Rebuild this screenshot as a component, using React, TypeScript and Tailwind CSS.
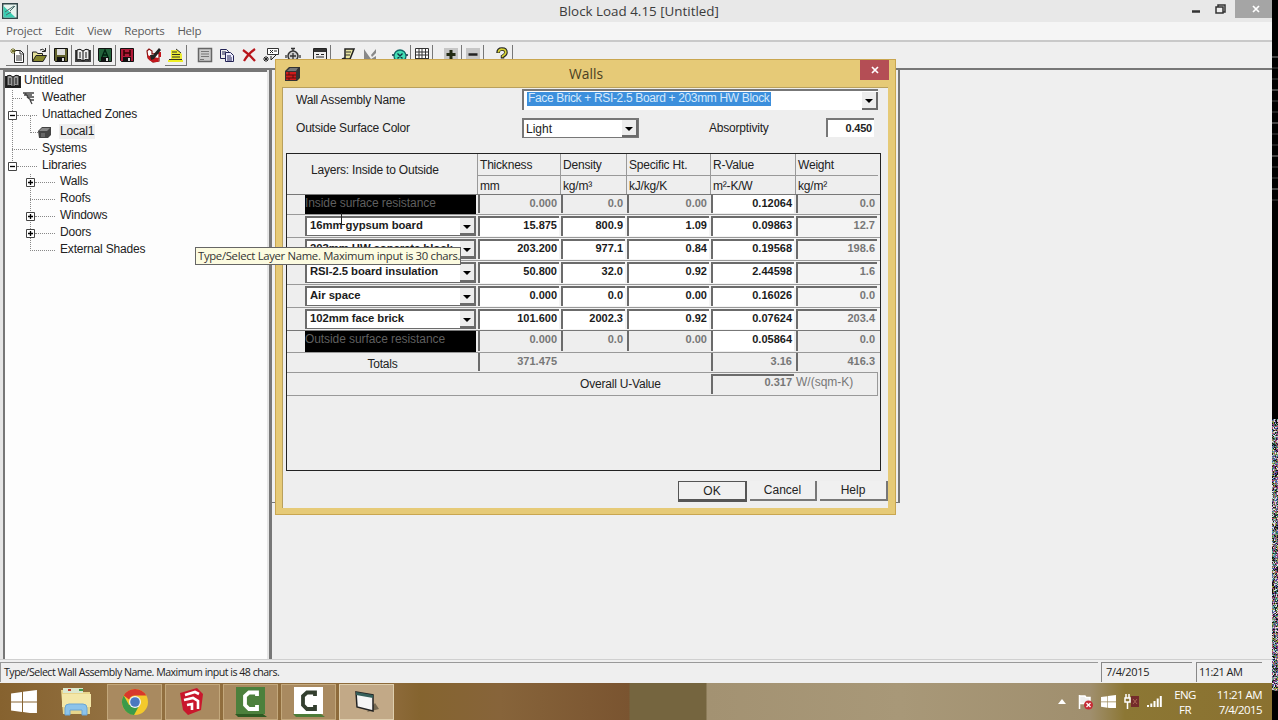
import React from 'react';
import clsx from 'clsx';

type Tone = 'edit' | 'locked';

interface Layer {
  name: string;
  values: string[];
  height: string;
}

const layers: Layer[] = [
  { name: '16mm gypsum board', values: ['15.875', '800.9', '1.09', '0.09863', '12.7'], height: 'h-[23px]' },
  { name: '203mm HW concrete block', values: ['203.200', '977.1', '0.84', '0.19568', '198.6'], height: 'h-[23px]' },
  { name: 'RSI-2.5 board insulation', values: ['50.800', '32.0', '0.92', '2.44598', '1.6'], height: 'h-[24px]' },
  { name: 'Air space', values: ['0.000', '0.0', '0.00', '0.16026', '0.0'], height: 'h-[23px]' },
  { name: '102mm face brick', values: ['101.600', '2002.3', '0.92', '0.07624', '203.4'], height: 'h-[23px]' },
];

const colWidths = ['w-[83px]', 'w-[66px]', 'w-[84px]', 'w-[85px]', 'w-[83px]'];

const headers = [
  ['Thickness', 'mm'],
  ['Density', 'kg/m³'],
  ['Specific Ht.', 'kJ/kg/K'],
  ['R-Value', 'm²-K/W'],
  ['Weight', 'kg/m²'],
];

const tree = [
  { label: 'Weather', level: 1, icon: 'weather' },
  { label: 'Unattached Zones', level: 1, box: '-' },
  { label: 'Local1', level: 2, icon: 'cube', selected: true },
  { label: 'Systems', level: 1 },
  { label: 'Libraries', level: 1, box: '-' },
  { label: 'Walls', level: 2, box: '+' },
  { label: 'Roofs', level: 2 },
  { label: 'Windows', level: 2, box: '+' },
  { label: 'Doors', level: 2, box: '+' },
  { label: 'External Shades', level: 2 },
];

const Svg: React.FC<{ children: React.ReactNode; className?: string; size?: number }> = ({ children, className, size = 16 }) => (
  <svg width={size} height={size} viewBox="0 0 16 16" className={clsx('shrink-0', className)} fill="none">
    {children}
  </svg>
);

const Book = ({ dark = false }: { dark?: boolean }) => (
  <Svg>
    <path d="M0 3h2v10h12V3h2v12H0z" fill={dark ? '#222' : '#444'} />
    <path d="M2 3q3-2 6 1 3-3 6-1v10q-3-2-6 1-3-3-6-1z" fill={dark ? '#999' : '#eee'} stroke="#111" />
    <path d="M8 4v10M4 6h2M4 8h2M4 10h2M10 6h2M10 8h2M10 10h2" stroke="#111" />
  </Svg>
);

const Disk = ({ body, letter }: { body: string; letter?: string }) => (
  <Svg>
    <path d="M1.500 1.500h13v13h-12l-1-1z" fill={body} stroke="#111" />
    <path d="M4 2h8v6H4z" fill={letter ? body : '#ddd'} />
    <path d="M4 10h8v4.500H4z" fill="#111" />
    <path d="M9 11h2v3H9z" fill="#ddd" />
    {letter === 'A' && <path d="M5 10L8 3l3 7M6 8h4" stroke="#021" strokeWidth="1.300" />}
    {letter === 'H' && <path d="M5 3v6M11 3v6M5 6h6" stroke="#300" strokeWidth="1.500" />}
  </Svg>
);

const icons = {
  create: (
    <Svg>
      <path d="M5.500 3.500h6l3 3v9h-9z" fill="#fff" stroke="#222" />
      <path d="M11 3v4h4M7 9h6M7 11h6M7 13h6" stroke="#333" />
      <path d="M4 1v6M1 4h6M2 2l4 4M6 2L2 6" stroke="#77752d" />
    </Svg>
  ),
  open: (
    <Svg>
      <path d="M1.500 14V5h4l1 1.500h5V9" fill="#e6e29a" stroke="#222" />
      <path d="M1.500 14.500l3.500-6h10.500l-3.500 6z" fill="#85852b" stroke="#222" />
      <path d="M9 3q3-2 5 1M14.500 1v3.500H11" stroke="#222" />
    </Svg>
  ),
  wizard: (
    <Svg>
      <path d="M1 4l2-2 3 2v3l7-1v8l-6 1-5-4z" fill="#fff" stroke="#811" strokeWidth="1.200" />
      <path d="M1 8l2 5 4 2h5l1-4-6-1z" fill="#c4161c" />
      <path d="M4 8l1 5 3-1 7-9-2-2-6 7z" fill="#222" />
      <path d="M13 5h2v5h-2z" fill="#c4161c" />
    </Svg>
  ),
  report: (
    <Svg>
      <path d="M3 3h6l5 4v6H3z" fill="#ee3" />
      <path d="M0 13h15v2H0z" fill="#ee2" />
      <path d="M4 5h5M4 7.500h8M4 10h8M8 2l5 4M1 12.500h13" stroke="#332" />
    </Svg>
  ),
  list: (
    <Svg>
      <path d="M1.500 1.500h13v13h-13z" fill="#ccc" stroke="#666" strokeWidth="1.500" />
      <path d="M4 4.500h8M4 7h8M4 9.500h8M3 12.500h4" stroke="#777" strokeWidth="1.200" />
    </Svg>
  ),
  copy: (
    <Svg>
      <path d="M1.500 2.500h6l2 2v7h-8z" fill="#eee" stroke="#225" />
      <path d="M6.500 5.500h5l3 3v6h-8z" fill="#eef" stroke="#225" />
      <path d="M3 5h4M3 7h3M8 9h4M8 11h5M8 13h5" stroke="#225" />
    </Svg>
  ),
  remove: (
    <Svg>
      <path d="M2 3q6 4 12 11M14 2Q7 7 3 14" stroke="#b8151b" strokeWidth="2.200" />
    </Svg>
  ),
  props: (
    <Svg>
      <path d="M4.500 1.500h11v6h-11z" fill="#fff" stroke="#333" />
      <path d="M7 3l3 3M10 3L7 6M11 4h3M13 8l-5 5v-4M3 9v6M0 12h6M1 10l4 4M5 10l-4 4" stroke="#222" />
    </Svg>
  ),
  timer: (
    <Svg>
      <circle cx="8" cy="9" r="5" fill="#ccc" stroke="#333" strokeWidth="1.500" />
      <path d="M8 6v6M5 9h6M8 1v3M6 1.500h4M1 8v3M15 8v3" stroke="#333" strokeWidth="1.300" />
    </Svg>
  ),
  sheet: (
    <Svg>
      <path d="M1.500 1.500h13v14h-13z" fill="#eee" stroke="#222" />
      <path d="M2 2h12v3H2z" fill="#333" />
      <path d="M4 7.500h3M9 7.500h3M4 10h8M4 12.500h8" stroke="#222" />
    </Svg>
  ),
  scroll: (
    <Svg>
      <path d="M5 2h9l-4 10H2l3-1z" fill="#e8e5a0" stroke="#222" strokeWidth="1.500" />
      <path d="M6 5h5M5 8h5M1 13h9" stroke="#333" />
    </Svg>
  ),
  chart: (
    <Svg>
      <path d="M2 2v12h12V9L9 12 4 5zM9 8l5-6v4l-4 4z" fill="#888" />
    </Svg>
  ),
  gauge: (
    <Svg>
      <circle cx="8" cy="9" r="6" fill="#43dfb4" stroke="#166" strokeWidth="1.300" />
      <path d="M5.500 6.500l5 5M10.500 6.500l-5 5M0 8h2M14 8h2" stroke="#134" strokeWidth="1.400" />
    </Svg>
  ),
  grid: (
    <Svg>
      <path d="M1.500 1.500h13v13h-13zM1 5h14M1 8h14M1 11.500h14M5 1v14M8 1v14M11.500 1v14" fill="#fff" stroke="#333" />
    </Svg>
  ),
  plus: (
    <Svg>
      <path d="M1 1h14v13H1z" fill="#c6c6c6" />
      <path d="M8 3v9M3.500 7.500h9" stroke="#232b14" strokeWidth="3" />
    </Svg>
  ),
  minus: (
    <Svg>
      <path d="M1 1h14v13H1z" fill="#c6c6c6" />
      <path d="M3.500 7.500h9" stroke="#222" strokeWidth="2.500" />
    </Svg>
  ),
  help: (
    <Svg>
      <path d="M4 6q0-4 4-4t4 3.500q0 2-3.500 4v2" stroke="#222" strokeWidth="3.500" />
      <path d="M4.300 5.500q.5-3.500 4-3.300 3.500 0 3.500 3 0 2-3.300 4v1" stroke="#d7d335" strokeWidth="1.700" />
      <path d="M7 13h3v2H7z" fill="#333" />
    </Svg>
  ),
};

const toolGroups = [
  { gap: 'ml-[6px]', raised: true, items: [icons.create, icons.open, <Disk body="#62622e" />, <Book />, <Disk body="#23633b" letter="A" />] },
  { gap: '', raised: false, items: [<Disk body="#b01938" letter="H" />] },
  { gap: 'ml-[5px]', raised: false, items: [icons.wizard] },
  { gap: '', raised: true, items: [icons.report] },
  { gap: 'ml-[7px]', raised: false, items: [icons.list, icons.copy, icons.remove, icons.props, icons.timer] },
  { gap: 'ml-[5px]', raised: true, items: [icons.sheet] },
  { gap: 'ml-[6px]', raised: false, items: [icons.scroll, icons.chart] },
  { gap: 'ml-[8px]', raised: true, items: [icons.gauge, icons.grid] },
  { gap: 'ml-[7px]', raised: true, items: [icons.plus, icons.minus] },
  { gap: 'ml-[7px]', raised: true, items: [icons.help] },
];

const Arrow = () => (
  <span className="flex h-full w-4 shrink-0 items-center justify-center border-b-2 border-r-2 border-[#6b6b6b] bg-[#ededed]">
    <span className="mt-0.5 border-x-4 border-t-4 border-x-transparent border-t-black" />
  </span>
);

const TitleBar = () => (
  <div className="flex h-[22px] shrink-0 items-start bg-[#e8e8e8]">
    <svg width="16" height="16" viewBox="0 0 16 16" className="ml-[2px] mt-[3px]">
      <path d="M.7.7h14.600v14.600H.7z" fill="#e6f4ef" stroke="#32474a" strokeWidth="1.400" />
      <path d="M1.500 3l12 11.500H1.500z" fill="#39cdb2" />
      <path d="M3 9l9-6M8 8l5-5M4 12l5-3" stroke="#4b6b6b" />
    </svg>
    <div className="flex-1 pr-[12px] text-center font-['Open_Sans',sans-serif] text-[13.400px] leading-[22px] text-[#3b3b3b]">
      Block Load 4.15 [Untitled]
    </div>
    <svg width="36" height="22" className="-ml-[80px]">
      <path d="M0 11.500h8" stroke="#333" strokeWidth="2.500" />
      <path d="M26 7V5h7v7h-2" fill="none" stroke="#333" strokeWidth="1.500" />
      <path d="M24 7h7v6h-7z" fill="#eee" stroke="#333" strokeWidth="1.500" />
    </svg>
    <div className="ml-[7px] flex h-[18px] w-[37px] items-center justify-center bg-[#a5a5a5]">
      <svg width="8" height="8" className="ml-1">
        <path d="M1 1l6 6M7 1L1 7" stroke="#fff" strokeWidth="1.700" />
      </svg>
    </div>
  </div>
);

const MenuBar = () => (
  <div className="flex h-[20px] shrink-0 gap-[13px] border-b-2 border-[#c9c9c9] bg-[#f5f5f5] pl-[6px] font-['Open_Sans',sans-serif] text-[11.500px] leading-[18px] tracking-[-0.25px] text-[#5a5a5a]">
    {['Project', 'Edit', 'View', 'Reports', 'Help'].map((m) => (
      <span key={m}>{m}</span>
    ))}
  </div>
);

const ToolBar = () => (
  <div className="flex h-[26px] shrink-0 items-center bg-[#efefef]">
    {toolGroups.map((g, i) => (
      <div key={i} className={clsx('flex', g.gap)}>
        {g.items.map((icon, j) => (
          <span
            key={j}
            className={clsx(
              'flex h-[21px] w-[22px] items-center justify-center border-b border-r',
              g.raised ? 'border-[#777]' : 'border-transparent'
            )}
          >
            {icon}
          </span>
        ))}
      </div>
    ))}
  </div>
);

const TreeRow: React.FC<{ row: (typeof tree)[number] }> = ({ row }) => {
  const box = row.box && (
    <svg width="9" height="9" className="relative shrink-0">
      <path d="M.5.5h8v8h-8z" fill="#fff" stroke="#444" />
      <path d={row.box === '+' ? 'M2 4.500h5M4.500 2v5' : 'M2 4.500h5'} stroke="#000" strokeWidth="1.300" />
    </svg>
  );
  return (
    <div className="flex h-[16.900px] items-center">
      {row.level === 2 && <span className="w-[18px]" />}
      <span className="flex h-full w-[37px] items-center pl-[3px]">
        {box || <span className="w-[4px]" />}
        {row.icon !== 'cube' && <span className={clsx('h-0 border-t border-dotted border-[#888]', row.icon ? 'w-[10px]' : box ? 'w-[20px]' : 'w-[25px]')} />}
        {row.icon === 'weather' && (
          <svg width="14" height="14" viewBox="0 0 14 14">
            <path d="M1 2h11M2 4h8M3 2l3 4h6M5 6l4 3h3M8 9l2 4" fill="none" stroke="#444" strokeWidth="1.300" />
          </svg>
        )}
        {row.icon === 'cube' && (
          <>
            <span className="h-0 w-[8px] border-t border-dotted border-[#888]" />
            <svg width="14" height="13" viewBox="0 0 14 13" className="shrink-0">
              <path d="M0 5l4-4h9v8l-3 3H1z" fill="#444" />
              <path d="M1 5l3-3h8l-3 3z" fill="#888" />
              <path d="M3 7h4v4H3z" fill="#666" />
            </svg>
          </>
        )}
      </span>
      <span className={clsx('-mt-0.5 leading-[15px]', row.selected && '-ml-px bg-[#eee] px-px')}>{row.label}</span>
    </div>
  );
};

const ProjectTree = () => (
  <div className="flex w-[272px] shrink-0 border-r-[3px] border-[#777] bg-[#e6e6e6]">
    <div className="ml-[3px] w-[264px] border-l-2 border-t-2 border-[#777] bg-[#fdfdfd] font-['Liberation_Sans',Arial,sans-serif] text-[12px] tracking-[-0.18px] text-[#222]">
      <div className="flex h-[18px] items-center gap-[3px] leading-[18px]">
        <Book dark />
        <span className="-mt-0.5">Untitled</span>
      </div>
      <div className="relative">
        <svg width="40" height="170" className="absolute left-0 top-0">
          <path d="M7.500 0v76M25.500 26v17M25.500 84v77" stroke="#888" strokeDasharray="1 1" />
        </svg>
        {tree.map((row) => (
          <TreeRow key={row.label} row={row} />
        ))}
      </div>
    </div>
  </div>
);

const Cell: React.FC<{ width: string; tone: Tone; children?: React.ReactNode; flush?: boolean; leading?: string }> = ({
  width,
  tone,
  children,
  flush,
  leading = 'leading-[17px]',
}) => (
  <div className={clsx('h-full shrink-0', width, flush ? 'pb-px' : 'pb-px pt-px')}>
    <div
      className={clsx(
        'mr-[2px] h-full border-l-2 border-[#6b6b6b] pr-[2px] text-right text-[11px] font-bold tracking-normal',
        leading,
        !flush && 'border-t-2',
        tone === 'edit' ? 'bg-white text-[#1b1b1b]' : 'text-[#777]'
      )}
    >
      {children}
    </div>
  </div>
);

const LayerRow: React.FC<{ layer: Layer }> = ({ layer }) => (
  <div className={clsx('flex border-t border-[#999] bg-[#f4f4f4]', layer.height)}>
    <div className="w-[191px] shrink-0 bg-[#eee] py-px pl-[18px]">
      <div className="mr-[2px] flex h-full border-b border-l-2 border-r border-t-2 border-[#6b6b6b] bg-white">
        <span className="w-[153px] shrink-0 overflow-hidden whitespace-nowrap pl-[3px] text-[11.300px] font-bold leading-[15px] tracking-[-0.05px] text-[#1b1b1b]">
          {layer.name}
        </span>
        <Arrow />
      </div>
    </div>
    {layer.values.map((v, i) => (
      <Cell key={i} width={colWidths[i]} tone={i === 4 ? 'locked' : 'edit'} leading="leading-[15px]">
        {v}
      </Cell>
    ))}
  </div>
);

const SurfaceRow: React.FC<{ name: string; r: string; height: string }> = ({ name, r, height }) => (
  <div className={clsx('flex border-t border-[#777] bg-[#eee]', height)}>
    <div className="w-[191px] shrink-0 pl-[18px]">
      <div className="mr-[2px] h-full overflow-hidden bg-black text-[12px] leading-[16px] tracking-[-0.08px] text-[#5f5f5f]">{name}</div>
    </div>
    {['0.000', '0.0', '0.00', r, '0.0'].map((v, i) => (
      <Cell key={i} width={colWidths[i]} tone={i === 3 ? 'edit' : 'locked'} flush>
        {v}
      </Cell>
    ))}
  </div>
);

const LayerTable = () => (
  <div className="h-[318px] w-[595px] border border-[#222]">
    <div className="flex h-[40px]">
      <div className="w-[190px] pl-[24px] pt-[8px] leading-[16px]">Layers: Inside to Outside</div>
      {headers.map(([title, unit], i) => (
        <div key={title} className={clsx('border-l border-[#999]', colWidths[i])}>
          <div className="h-[22px] whitespace-nowrap border-b border-[#999] pl-[2px] leading-[22px]">{title}</div>
          <div className="pl-[2px] leading-[20px]">{unit}</div>
        </div>
      ))}
    </div>
    <SurfaceRow name="Inside surface resistance" r="0.12064" height="h-[20px]" />
    {layers.map((l) => (
      <LayerRow key={l.name} layer={l} />
    ))}
    <SurfaceRow name="Outside surface resistance" r="0.05864" height="h-[22px]" />
    <div className="flex h-[20px] border-t border-[#999]">
      <div className="w-[191px] text-center leading-[22px]">Totals</div>
      <Cell width="w-[83px]" tone="locked" flush>371.475</Cell>
      <div className="w-[150px]" />
      <Cell width="w-[85px]" tone="locked" flush>3.16</Cell>
      <Cell width="w-[83px]" tone="locked" flush>416.3</Cell>
    </div>
    <div className="mr-[2px] flex h-[24px] border-b border-r border-t border-[#999]">
      <div className="w-[424px] pl-[293px] leading-[23px]">Overall U-Value</div>
      <Cell width="w-[85px]" tone="locked" leading="leading-[13px]">0.317</Cell>
      <div className="whitespace-nowrap leading-[18px] tracking-normal text-[#777]">W/(sqm-K)</div>
    </div>
  </div>
);

const WallsDialog = () => (
  <div className="absolute left-[275px] top-[59px] h-[456px] w-[621px] border border-[#c9a650] bg-[#e6ca77]">
    <div className="flex h-[27px] items-start">
      <svg width="15" height="14" viewBox="0 0 15 14" className="ml-[9px] mt-[7px]">
        <path d="M0 4l4-4h11v11l-3 3H0z" fill="#333" />
        <path d="M2 4l3-3h8l-2 3z" fill="#777" />
        <path d="M1 5h10v8H1z" fill="#cf1b1b" />
        <path d="M1 8h10M1 11h10M4 5v3M8 8v3M4 11v2" stroke="#511" />
      </svg>
      <div className="flex-1 pl-[12px] text-center font-['Open_Sans',sans-serif] text-[13.800px] leading-[28px] text-[#4a4023]">Walls</div>
      <div className="mr-[6px] flex h-[20px] w-[29px] items-center justify-center bg-[#b44e55]">
        <svg width="8" height="8">
          <path d="M1 1l6 6M7 1L1 7" stroke="#fff" strokeWidth="1.700" />
        </svg>
      </div>
    </div>
    <div className="ml-[6px] flex h-[421px] w-[606px] flex-col border-l border-t border-[#b9a05c] bg-[#eee] font-['Liberation_Sans',Arial,sans-serif] text-[12px] tracking-[-0.2px] text-[#222]">
      <div className="flex h-[24px] items-start">
        <span className="w-[239px] pl-[13px] leading-[24px]">Wall Assembly Name</span>
        <div className="mt-px flex h-[21px] w-[356px] border-l-2 border-t-2 border-[#777] bg-white pt-px">
          <div className="flex-1">
            <span className="ml-[3px] block h-[14px] w-[244px] whitespace-nowrap bg-[#3c8fdc] pl-px text-[12px] leading-[13px] tracking-[-0.34px] text-[#d5e9fb]">
              Face Brick + RSI-2.5 Board + 203mm HW Block
            </span>
          </div>
          <Arrow />
        </div>
      </div>
      <div className="mt-[6px] flex h-[20px] items-center">
        <span className="w-[239px] pl-[13px]">Outside Surface Color</span>
        <div className="flex h-[20px] w-[117px] border border-l-2 border-t-2 border-[#777] bg-white">
          <span className="flex-1 pl-[2px] leading-[18px] tracking-normal">Light</span>
          <Arrow />
        </div>
        <span className="ml-[70px] w-[117px]">Absorptivity</span>
        <div className="-mt-0.5 h-[19px] w-[48px] border-l-2 border-t-2 border-[#777] bg-white pr-[2px] text-right text-[11px] font-bold leading-[16px]">0.450</div>
      </div>
      <div className="ml-[3px] mt-[15px]">
        <LayerTable />
      </div>
      <div className="ml-[395px] mt-[10px] flex gap-[3px] tracking-normal">
        <button className="h-[21px] w-[69px] border-b-[3px] border-l border-r-2 border-t border-[#555] bg-[#f0f0f0] leading-[16px]">OK</button>
        <button className="h-[20px] w-[67px] border-b-2 border-r-2 border-[#777] bg-[#f0f0f0]">Cancel</button>
        <button className="h-[20px] w-[68px] border-b-2 border-r-2 border-[#777] bg-[#f0f0f0]">Help</button>
      </div>
    </div>
  </div>
);

const StatusBar = () => (
  <div className="flex h-[24px] shrink-0 gap-[3px] border-t border-[#d0d0d0] bg-[#efefef] pb-px pt-[2px] font-['Open_Sans',sans-serif] text-[11px] leading-[18px] tracking-[-0.03em] text-[#222]">
    <div className="w-[1098px] border-l border-t border-[#999] pl-[3px] text-[10.600px] tracking-[-0.5px]">Type/Select Wall Assembly Name. Maximum input is 48 chars.</div>
    <div className="w-[91px] border-l border-t border-[#888] pl-[4px]">7/4/2015</div>
    <div className="ml-[1px] w-[66px] border-l border-t border-[#888] pl-[2px] tracking-[-0.05em]">11:21 AM</div>
  </div>
);

const TaskButton: React.FC<{ children: React.ReactNode; active?: boolean }> = ({ children, active }) => (
  <div className={clsx('flex h-[36px] w-[55px] items-center justify-center border', active ? 'border-[#dfcfae] bg-[#c2a987]' : 'border-[#c3a87c] bg-[#a98a60]')}>
    {children}
  </div>
);

const CBracket = ({ bg, fg, edge }: { bg: string; fg: string; edge: string }) => (
  <svg width="32" height="30" viewBox="0 0 32 30">
    <path d="M0 27h28l4 3H3z" fill={edge} />
    <path d="M1 0h29v27H1z" fill={bg} />
    <path d="M22 9V5.500h-8L10 9v9l4 4h8v-4" fill="none" stroke={fg} strokeWidth="3.800" />
  </svg>
);

const WindowsLogo = ({ size }: { size: number }) => (
  <svg width={size} height={size * 0.92} viewBox="0 0 26 24">
    <path d="M0 3.500l11-1.500v9.500H0zM12 1.800L26 0v11.500H12zM0 12.500h11V22L0 20.500zM12 12.500h14V24l-14-1.800z" fill="#fff" />
  </svg>
);

const TaskBar = () => (
  <div className="flex h-[37px] shrink-0 items-center bg-[linear-gradient(90deg,#86622f_0px,#927040_108px,#8d6a3a_394px,#85642f_420px,#87643a_500px,#7a5430_629px,#75653f_630px,#75653f_706px,#a39272_707px,#a89878_900px,#a08f6e_1090px,#8c7734_1125px,#8a7130_1272px)] font-['Open_Sans',sans-serif] text-[11.500px] text-white">
    <div className="flex w-[46px] justify-end">
      <span className="mr-[9px]"><WindowsLogo size={26} /></span>
    </div>
    <div className="flex w-[61px] justify-center">
      <svg width="34" height="30" viewBox="0 0 34 30">
        <path d="M1 3h12l2 2h15v22H3z" fill="#e8d58b" />
        <path d="M3 1h20v5H3z" fill="#dce8cf" />
        <path d="M8 2h3v2H8z" fill="#c23b2b" />
        <path d="M19 2h4v2h-4z" fill="#3f9b4e" />
        <path d="M2 7h29v13H2z" fill="#f3e7a8" />
        <path d="M5 28v-7q0-4 4-4h14q4 0 4 4v7h-5v-5H10v5z" fill="#8cc3ea" stroke="#6aa5d4" />
      </svg>
    </div>
    <div className="flex gap-[3px]">
      <TaskButton>
        <svg width="28" height="28" viewBox="0 0 28 28">
          <circle cx="14" cy="14" r="13" fill="#f3c92c" />
          <path d="M2.700 7.500A13 13 0 0 1 25.300 7.500H14a6.500 6.500 0 0 0-6 4z" fill="#d8382c" />
          <path d="M2.700 7.500A13 13 0 0 0 13 27l5-9-10-1z" fill="#3b9a4a" />
          <circle cx="14" cy="14" r="6" fill="#f4f4f4" />
          <circle cx="14" cy="14" r="4.800" fill="#4a78c0" />
        </svg>
      </TaskButton>
      <TaskButton>
        <svg width="28" height="28" viewBox="0 0 28 28">
          <path d="M1 5L18 0l6 6-2 16-13 5-5-5z" fill="#c9172c" />
          <path d="M6 7l10-3 4 2M5 12l9-2 5 3v8M8 17l5-1v6" fill="none" stroke="#fff" strokeWidth="2.600" />
        </svg>
      </TaskButton>
      <TaskButton><CBracket bg="#4c803c" fg="#fff" edge="#2e5a22" /></TaskButton>
      <TaskButton><CBracket bg="#fff" fg="#333f2f" edge="#4d7c38" /></TaskButton>
      <TaskButton active>
        <svg width="24" height="22" viewBox="0 0 24 22">
          <path d="M12 21l12-3-4-6z" fill="#756850" />
          <path d="M1 1l17 3v16L2 16z" fill="#f5f5f5" stroke="#222" strokeWidth="1.500" />
          <path d="M1 1l17 3v3L1 4z" fill="#355f5a" />
        </svg>
      </TaskButton>
    </div>
    <div className="flex-1" />
    <div className="flex items-center gap-[8px]">
      <svg width="8" height="5"><path d="M0 5l4-5 4 5z" fill="#fff" /></svg>
      <svg width="15" height="16" viewBox="0 0 15 16" className="ml-[4px]">
        <path d="M1.500 1v14M2 2h5l1 1.500h4v6H2" fill="#eee" stroke="#fff" strokeWidth="1.500" />
        <circle cx="10.500" cy="11" r="4.500" fill="#c62a35" />
        <path d="M8.500 9l4 4M12.500 9l-4 4" stroke="#fff" strokeWidth="1.300" />
      </svg>
      <WindowsLogo size={15} />
      <svg width="15" height="17" viewBox="0 0 15 17">
        <path d="M7 3h8v11H7z" fill="#742b2b" />
        <path d="M2 1v4M5 1v4M1 5h5v4H1zM3.500 9v7" fill="none" stroke="#fff" strokeWidth="1.500" />
        <path d="M9 6l4 5M13 6l-4 5" stroke="#a65" />
      </svg>
      <svg width="15" height="13">
        <path d="M1 12v-2M4.300 12V8.500M7.500 12V6M10.700 12V3.500M13.800 12V1" stroke="#fff" strokeWidth="2" />
      </svg>
    </div>
    <div className="ml-[11px] flex w-[24px] flex-col items-center leading-[15px] tracking-[-0.05em]">
      <span>ENG</span>
      <span>FR</span>
    </div>
    <div className="ml-[13px] mr-[10px] flex w-[52px] flex-col items-end whitespace-nowrap leading-[15px] tracking-[-0.05em]">
      <span>11:21 AM</span>
      <span>7/4/2015</span>
    </div>
  </div>
);

const noiseColors = ['#111', '#c3c9d2', '#2f6f52', '#7a2f8a', '#e4e4e4', '#4161af', '#9b9a36', '#222', '#8a8a8a', '#b24b6b', '#5fb0a0'];
const noise = Array.from({ length: 6 * 272 }, (_, i) => ({
  x: i % 6,
  y: 419 + Math.floor(i / 6),
  color: noiseColors[Math.floor(Math.abs(Math.sin(i * 12.9898) * 43758.5453)) % noiseColors.length],
}));

const EdgeStrip = () => (
  <svg width="6" height="720" className="shrink-0 bg-black">
    {Array.from({ length: 14 }, (_, i) => (
      <rect key={i} x="0" y={56 + i * 11} width="6" height="2" fill={i % 3 ? '#222' : '#444'} />
    ))}
    {noise.map((n, i) => (
      <rect key={i} x={n.x} y={n.y} width="1" height="1" fill={n.color} />
    ))}
  </svg>
);

const App: React.FC = () => (
  <div className="relative flex h-[720px] w-[1278px] overflow-hidden bg-[#efefef]">
    <div className="flex w-[1272px] flex-col">
      <TitleBar />
      <MenuBar />
      <ToolBar />
      <div className="flex h-[591px] shrink-0 border-t-2 border-[#777]">
        <ProjectTree />
        <div className="h-[433px] w-[628px] border-b border-r-2 border-[#777]" />
      </div>
      <StatusBar />
      <TaskBar />
    </div>
    <EdgeStrip />
    <WallsDialog />
    {/* Hover hint over the layer combo */}
    <div className="absolute left-[195px] top-[247px] h-[18px] w-[266px] whitespace-nowrap border border-[#666] bg-[#fcfbe0] pl-[2px] font-['Open_Sans',sans-serif] text-[11.300px] leading-[16px] tracking-[-0.31px] text-[#333]">
      Type/Select Layer Name. Maximum input is 30 chars.
    </div>
    <svg width="5" height="15" className="absolute left-[340px] top-[213px]">
      <path d="M1.500 0v12M0 11.500h5" stroke="#222" />
    </svg>
  </div>
);

export default App;
